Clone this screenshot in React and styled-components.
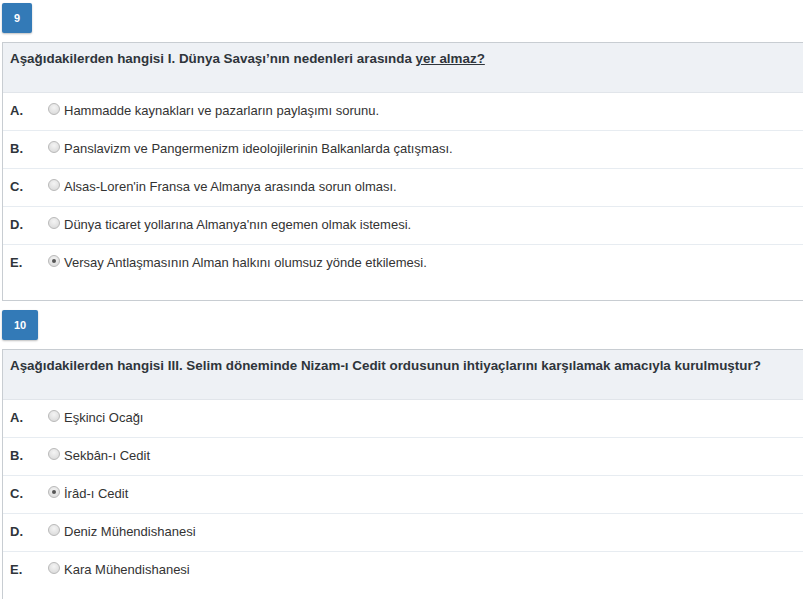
import styled, { createGlobalStyle } from "styled-components";

const GlobalStyle = createGlobalStyle`
  body {
    margin: 0;
    background: #fff;
    font-family: "Liberation Sans", Arial, sans-serif;
    color: #333;
    overflow: hidden;
  }
`;

const Page = styled.div`
  padding: 3px 0 0 2px;
  width: 812px;
`;

const Badge = styled.div`
  display: inline-flex;
  align-items: center;
  justify-content: center;
  height: 30px;
  padding: 0 12px;
  background: #337ab7;
  color: #fff;
  font-size: 11px;
  font-weight: bold;
  border-radius: 2px;
  box-shadow: 0 1px 2px rgba(0, 0, 0, 0.25);
`;

const Panel = styled.div`
  margin: 9px 0 9px;
  border: 1px solid #c8cdd2;
  padding-bottom: ${(p) => p.$pad}px;
`;

const Question = styled.div`
  background: #eef1f5;
  border-bottom: 1px solid #e1e5ea;
  height: 50px;
  padding: 8px 0 0 7px;
  box-sizing: border-box;
  font-size: 13.4px;
  font-weight: bold;
  color: #2f353b;
  line-height: 16px;

  & u {
    text-decoration: underline;
  }
`;

const Option = styled.div`
  display: flex;
  align-items: center;
  padding: 0 0 2px 7px;
  box-sizing: border-box;
  border-bottom: ${(p) => (p.$last ? "none" : "1px solid #e7ecf1")};
  height: ${(p) => (p.$last ? 37 : 38)}px;
`;

const Letter = styled.span`
  width: 38px;
  font-size: 13px;
  font-weight: bold;
  color: #2f353b;
`;

const Radio = styled.span`
  width: 10px;
  height: 10px;
  border-radius: 50%;
  border: 1px solid #b9b9b9;
  background: radial-gradient(circle at 50% 35%, #f4f4f4, #d6d6d6);
  display: inline-flex;
  align-items: center;
  justify-content: center;
  margin-right: 4px;
  margin-top: -3px;

  &::after {
    content: "";
    width: 4px;
    height: 4px;
    border-radius: 50%;
    background: ${(p) => (p.$checked ? "#555" : "transparent")};
  }
`;

const Text = styled.span`
  font-size: 13px;
  color: #333;
`;

const questions = [
  {
    n: 9,
    q: (
      <>
        Aşağıdakilerden hangisi I. Dünya Savaşı’nın nedenleri arasında{" "}
        <u>yer almaz?</u>
      </>
    ),
    options: [
      "Hammadde kaynakları ve pazarların paylaşımı sorunu.",
      "Panslavizm ve Pangermenizm ideolojilerinin Balkanlarda çatışması.",
      "Alsas-Loren'in Fransa ve Almanya arasında sorun olması.",
      "Dünya ticaret yollarına Almanya'nın egemen olmak istemesi.",
      "Versay Antlaşmasının Alman halkını olumsuz yönde etkilemesi.",
    ],
    checked: 4,
    pad: 18,
  },
  {
    n: 10,
    q: "Aşağıdakilerden hangisi III. Selim döneminde Nizam-ı Cedit ordusunun ihtiyaçlarını karşılamak amacıyla kurulmuştur?",
    options: [
      "Eşkinci Ocağı",
      "Sekbân-ı Cedit",
      "İrâd-ı Cedit",
      "Deniz Mühendishanesi",
      "Kara Mühendishanesi",
    ],
    checked: 2,
    pad: 18,
  },
];

const letters = ["A.", "B.", "C.", "D.", "E."];

export default function App() {
  return (
    <Page>
      <GlobalStyle />
      {questions.map((item) => (
        <div key={item.n}>
          <Badge>{item.n}</Badge>
          <Panel $pad={item.pad}>
            <Question>{item.q}</Question>
            {item.options.map((o, i) => (
              <Option key={i} $last={i === item.options.length - 1}>
                <Letter>{letters[i]}</Letter>
                <Radio $checked={i === item.checked} />
                <Text>{o}</Text>
              </Option>
            ))}
          </Panel>
        </div>
      ))}
    </Page>
  );
}
